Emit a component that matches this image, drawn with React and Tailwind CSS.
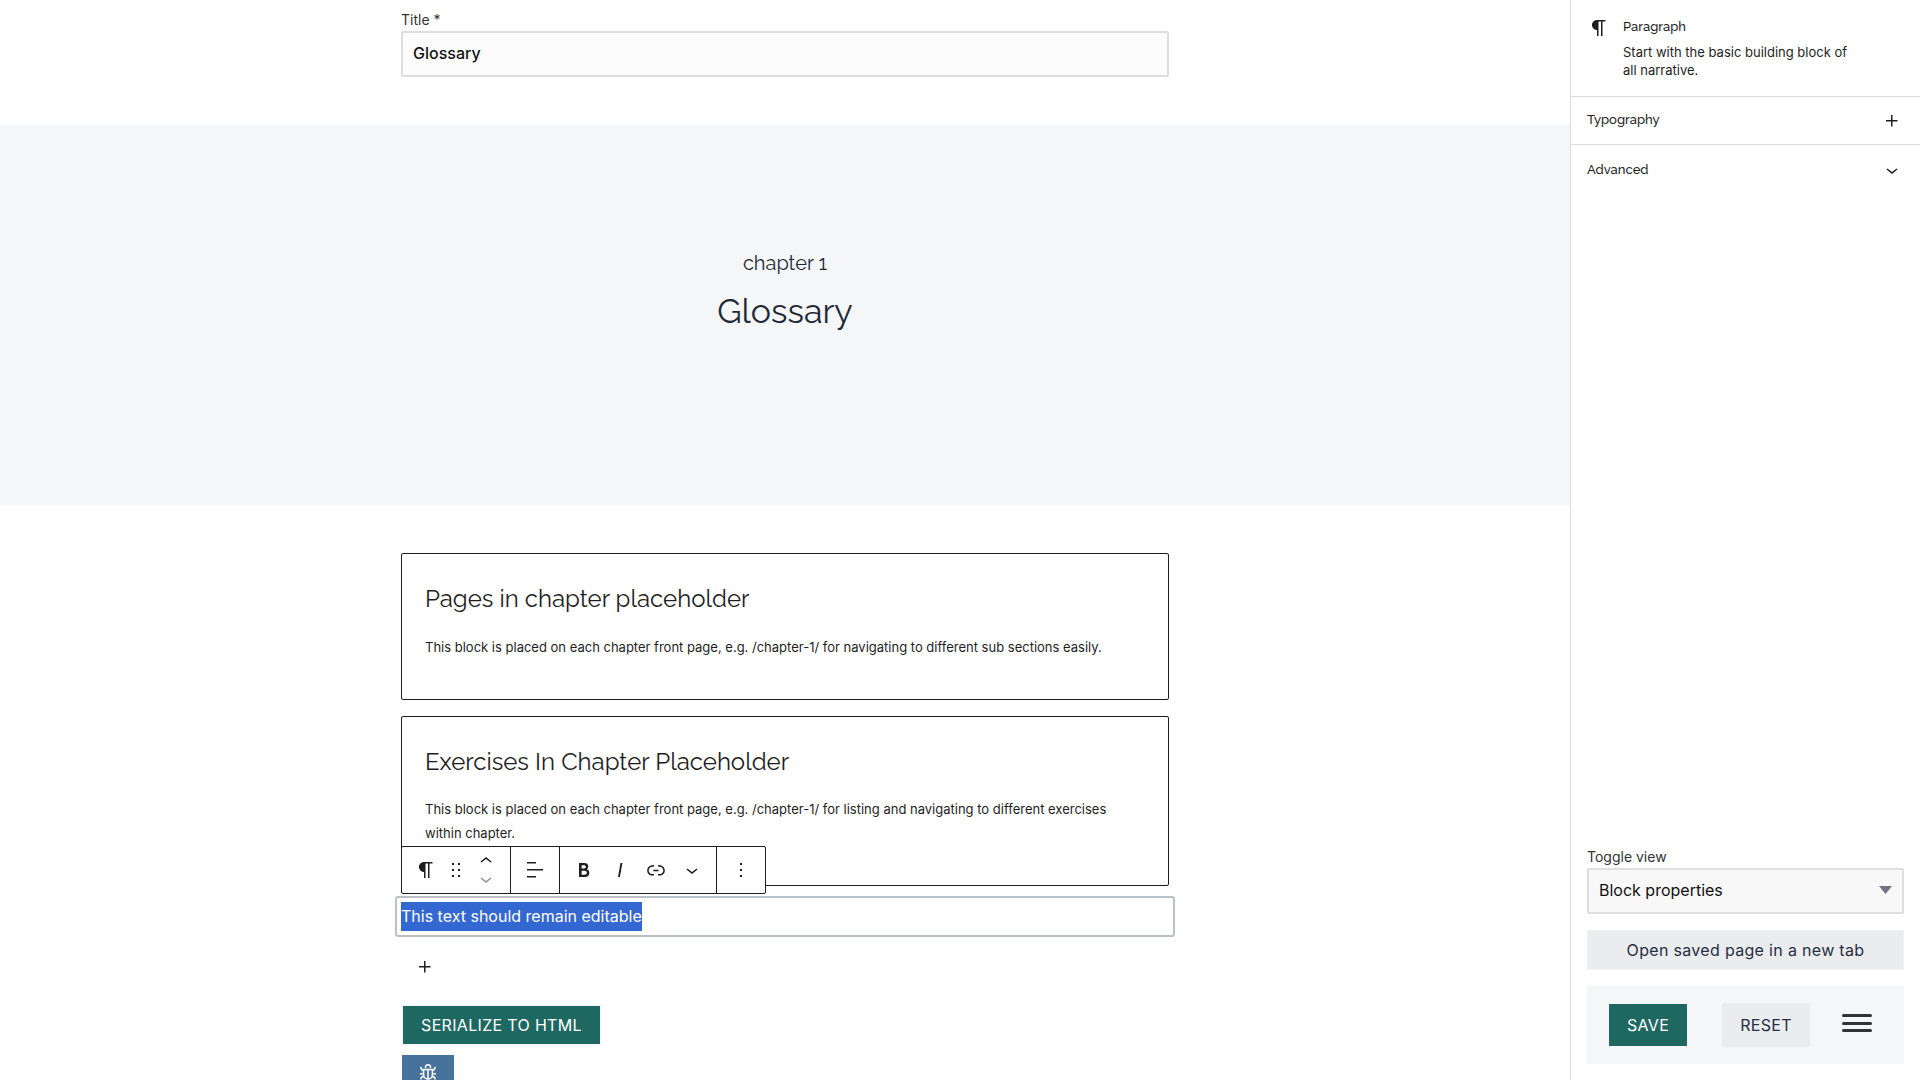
import React from "react";

const PATHS = {
  paragraph:
    "m9.99609 14v-.2251l.00391.0001v6.225h1.5v-14.5h2.5v14.5h1.5v-14.5h3v-1.5h-8.50391c-2.76142 0-5 2.23858-5 5 0 2.7614 2.23858 5 5 5z",
  drag: "M8 7h2V5H8v2zm0 6h2v-2H8v2zm0 6h2v-2H8v2zm6-14v2h2V5h-2zm0 8h2v-2h-2v2zm0 6h2v-2h-2v2z",
  up: "M6.5 12.4L12 8l5.5 4.4-.9 1.2L12 10l-4.5 3.6-1-1.2z",
  down: "M17.5 11.6L12 16l-5.5-4.4.9-1.2L12 14l4.5-3.6 1 1.2z",
  align: "M13 5.5H4V4h9v1.5Zm7 7H4V11h16v1.5Zm-7 7H4V18h9v1.5Z",
  bold: "M14.7 11.3c1-.6 1.5-1.6 1.5-3 0-2.3-1.3-3.4-4-3.4H7v14h5.8c1.4 0 2.5-.3 3.3-1 .8-.7 1.2-1.7 1.2-2.9.1-1.9-.8-3.1-2.6-3.7zm-5.1-4h2.3c.6 0 1.1.1 1.4.4.3.3.5.7.5 1.2s-.2 1-.5 1.2c-.3.3-.8.4-1.4.4H9.6V7.3zm4.6 9c-.4.3-1 .4-1.7.4H9.6v-3.9h2.9c.7 0 1.3.2 1.7.5.4.3.6.8.6 1.5s-.2 1.2-.6 1.5z",
  italic: "M12.5 5L10 19h1.9l2.5-14z",
  link: "M15.6 7.2H14v1.5h1.6c2 0 3.7 1.7 3.7 3.7s-1.7 3.7-3.7 3.7H14v1.5h1.6c2.8 0 5.2-2.3 5.2-5.2 0-2.9-2.3-5.2-5.2-5.2zM4.7 12.4c0-2 1.7-3.7 3.7-3.7H10V7.2H8.4c-2.9 0-5.2 2.3-5.2 5.2 0 2.9 2.3 5.2 5.2 5.2H10v-1.5H8.4c-2 0-3.7-1.7-3.7-3.7zm4.6.9h5.3v-1.5H9.3v1.5z",
  more: "M13 19h-2v-2h2v2zm0-6h-2v-2h2v2zm0-6h-2V5h2v2z",
  plus: "M11 12.5V17.5H12.5V12.5H17.5V11H12.5V6H11V11H6V12.5H11Z",
};

const INTER = "font-['Inter',sans-serif]";
const HEADING = "font-['Raleway','Lato',sans-serif]";

function Icon({ name, className = "" }) {
  return (
    <svg viewBox="0 0 24 24" className={"size-6 shrink-0 fill-current " + className}>
      <path d={PATHS[name]} />
    </svg>
  );
}

function Tool({ name, className = "w-9" }) {
  return (
    <button className={"flex h-full items-center justify-center " + className}>
      <Icon name={name} />
    </button>
  );
}

function Toolbar() {
  return (
    <div className="absolute top-[129px] -left-px flex h-12 w-[365px] rounded-xs border border-[#1e1e1e] bg-white">
      <div className="flex w-[109px] shrink-0 border-r border-[#1e1e1e]">
        <Tool name="paragraph" className="w-12" />
        <Tool name="drag" className="-ml-1.5 w-6" />
        <div className="ml-1.5 flex w-6 flex-col items-center">
          <Icon name="up" className="mt-0.5" />
          <Icon name="down" className="-mt-1.5 text-[#949494]" />
        </div>
      </div>
      <div className="flex w-[49px] shrink-0 border-r border-[#1e1e1e]">
        <Tool name="align" className="w-12" />
      </div>
      <div className="flex w-[157px] shrink-0 border-r border-[#1e1e1e] px-1.5">
        <Tool name="bold" />
        <Tool name="italic" />
        <Tool name="link" />
        <Tool name="down" />
      </div>
      <Tool name="more" className="w-12" />
    </div>
  );
}

function Placeholder({ title, text, textClass, className, children }) {
  return (
    <section className={"relative rounded-xs border border-[#1e1e1e] bg-white px-[23px] pt-[27px] " + className}>
      <h2 className={HEADING + " text-2xl leading-9 font-normal whitespace-nowrap"}>{title}</h2>
      <p className={"text-[13px] leading-6 " + textClass}>{text}</p>
      {children}
    </section>
  );
}

function Bug() {
  return (
    <svg viewBox="0 0 16 16" className="size-4 fill-none stroke-white stroke-[1.5]">
      <path d="M5.500 4V3a2.500 2.300 0 0 1 5 0v1M3.600 5.400h8.800v5.100a4.400 4.600 0 0 1-8.800 0zM8 5.400V15M3.600 6.800Q1 6 .8 2.800M12.400 6.800Q15 6 15.200 2.800M3.600 9.700H0M12.400 9.700H16M4 12Q1.200 12.500.8 15.500M12 12Q14.800 12.500 15.200 15.500" />
    </svg>
  );
}

function Main() {
  return (
    <main className="flex h-full w-[1570px] shrink-0 flex-col overflow-hidden">
      <div className="mx-auto w-[768px] pt-2.5">
        <label className="block h-[21px] text-sm leading-5 text-[#333]">Title *</label>
        <div className="flex h-[46px] items-center rounded-xs border-2 border-[#dedede] bg-[#fcfcfc] px-2.5 pb-0.5 text-base font-medium text-[#111]">
          Glossary
        </div>
      </div>
      <header className={HEADING + " mt-12 flex h-[380px] shrink-0 flex-col items-center bg-[#f5f6f8] pt-[122px] text-[#1d2939]"}>
        <div className="text-xl leading-8">chapter 1</div>
        <h1 className="mt-[7px] text-[34px] leading-[50px] font-normal">Glossary</h1>
      </header>
      <div className="mx-auto mt-12 w-[768px]">
        <Placeholder
          title="Pages in chapter placeholder"
          textClass="mt-[18px]"
          className="h-[147px]"
          text="This block is placed on each chapter front page, e.g. /chapter-1/ for navigating to different sub sections easily."
        />
        <Placeholder
          title="Exercises In Chapter Placeholder"
          textClass="mt-[17px]"
          className="mt-4 h-[170px]"
          text="This block is placed on each chapter front page, e.g. /chapter-1/ for listing and navigating to different exercises within chapter."
        >
          <Toolbar />
        </Placeholder>
        <div className="-mx-1.5 mt-2.5 flex h-[41px] items-center rounded-[3px] border-2 border-[#bbc0c6] px-1 text-base">
          <span className="h-[29px] bg-[#3367d1] leading-[29px] text-white">This text should remain editable</span>
        </div>
        <div className="mt-[18px] ml-3">
          <Icon name="plus" />
        </div>
        <button className="mt-[25px] flex h-[42px] w-[201px] items-center justify-center border-2 border-[#f5f6f8] bg-[#1f6862] text-base tracking-[0.32px] text-white">
          SERIALIZE TO HTML
        </button>
        <button className="mt-[9px] ml-px flex h-9 w-[52px] justify-center bg-[#46729c] pt-[9px]">
          <Bug />
        </button>
      </div>
    </main>
  );
}

function PanelRow({ title, icon, className, iconClass }) {
  return (
    <div className={"flex items-center justify-between px-4 " + className}>
      <span className={HEADING + " text-[13px] leading-5 font-medium"}>{title}</span>
      <Icon name={icon} className={iconClass} />
    </div>
  );
}

function Sidebar() {
  return (
    <aside className="flex h-full w-[350px] shrink-0 flex-col border-l border-[#dcdcde] bg-white">
      <div className="flex h-[97px] gap-3 border-b border-[#dcdcde] pt-4 pl-4">
        <Icon name="paragraph" />
        <div className="w-[240px]">
          <h2 className={HEADING + " mt-px text-[13px] leading-5 font-medium"}>Paragraph</h2>
          <p className="mt-1.5 text-[13px] leading-[18px]">Start with the basic building block of all narrative.</p>
        </div>
      </div>
      <PanelRow title="Typography" icon="plus" className="h-12 border-b border-[#dcdcde] pb-0.5" iconClass="mt-0.5" />
      <PanelRow title="Advanced" icon="down" className="h-[50px] pb-px" iconClass="mt-0" />
      <div className="mt-auto mb-4 ml-4 w-[317px]">
        <label className="block h-[21px] text-sm leading-5 text-[#333]">Toggle view</label>
        <div className="flex h-[46px] items-center justify-between rounded-xs border-2 border-[#dedede] bg-[#f8f8f8] px-2.5 pb-0.5 text-base text-[#111]">
          Block properties
          <svg viewBox="0 0 13 8" className="h-2 w-[13px] fill-[#6d7585]">
            <path d="M0 0h13L6.500 8z" />
          </svg>
        </div>
        <button className="mt-4 flex h-10 w-full items-center justify-center border border-[#f1f2f3] bg-[#ebecee] text-base tracking-[0.32px] text-[#243044]">
          Open saved page in a new tab
        </button>
        <div className="mt-4 flex h-[78px] items-center bg-[#f5f6f8] pl-[22px] text-base tracking-[0.32px]">
          <button className="h-[42px] w-[78px] bg-[#1f6862] text-white">SAVE</button>
          <button className="ml-[35px] h-11 w-[88px] bg-[#ebecee] text-[#243044]">RESET</button>
          <div className="mb-1 ml-8 flex flex-col gap-[4.5px]">
            <span className="h-[3px] w-[30px] rounded-full bg-[#333]" />
            <span className="h-[3px] w-[30px] rounded-full bg-[#333]" />
            <span className="h-[3px] w-[30px] rounded-full bg-[#333]" />
          </div>
        </div>
      </div>
    </aside>
  );
}

export default function App() {
  return (
    <div className={INTER + " flex h-[1080px] w-[1920px] overflow-hidden bg-white text-[#1e1e1e]"}>
      <Main />
      <Sidebar />
    </div>
  );
}
